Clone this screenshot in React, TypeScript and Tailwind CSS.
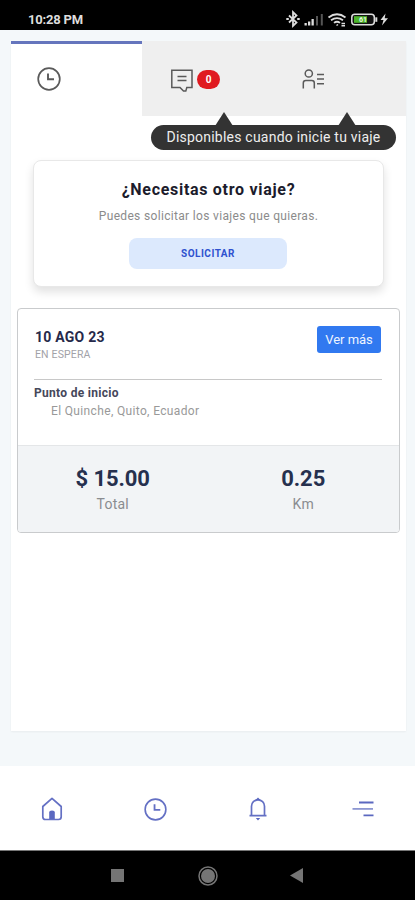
import React from 'react'

const ClockIcon = ({ className }: { className?: string }) => (
  <svg viewBox="0 0 24 24" fill="none" stroke="currentColor" className={className}>
    <circle cx="12" cy="12" r="10.8" strokeWidth="1.7" />
    <path d="M11 6.5v5.8h6" strokeWidth="1.9" />
  </svg>
)

const MessageIcon = () => (
  <svg viewBox="0 0 22 24" fill="none" stroke="#5a5a5a" strokeWidth="1.5" className="w-[22px] h-6">
    <path d="M.8 1.2h20.2v17.3h-5.2l-1 3.6h-2.300l-3.500-3.600H.8zM6.500 7.500h9M6.500 11.500h9" />
  </svg>
)

const PassengerIcon = () => (
  <svg viewBox="0 0 22 20" fill="none" stroke="#5a5a5a" strokeWidth="1.5" className="w-[22px] h-5">
    <circle cx="6.800" cy="4.500" r="3.600" />
    <path d="M1.300 19.500v-5.500q0-2.500 2.500-2.500h6q2.500 0 2.500 2.500v5.500M15 5.500h7M15 10h7M15 14.800h7" />
  </svg>
)

const HomeIcon = () => (
  <svg viewBox="0 0 22 24" fill="none" stroke="#6470c4" strokeWidth="1.7" className="w-[22px] h-6">
    <path d="M1.800 9.500 11 1.300l9.200 8.200v10.300q0 2.700-2.700 2.700h-13q-2.700 0-2.700-2.700z" strokeLinejoin="round" />
    <path d="M8.200 22v-6.500q0-2 2.800-2t2.800 2V22z" fill="#5b68c0" stroke="none" />
  </svg>
)

const BellIcon = () => (
  <svg viewBox="0 0 18 24" fill="none" stroke="#6470c4" strokeWidth="1.700" className="w-[18px] h-6">
    <path d="M2.500 18.500V9.300a6.500 6.500 0 0 1 13 0v9.200M.5 18.700h17" />
    <path d="M6.500 3 9 .5l2.500 2.500zM6.800 21h4.400L9 23.400z" fill="#5b68c0" stroke="none" />
  </svg>
)

const MenuIcon = () => (
  <svg viewBox="0 0 22 16" fill="none" strokeWidth="1.800" className="w-[22px] h-4">
    <path d="M7 1.500h14.500M11.500 14.300h10" stroke="#5b68c0" />
    <path d="M.5 7.900h20.500" stroke="#8d97d2" />
  </svg>
)

const StatusIcons = () => (
  <svg viewBox="0 0 104 18" className="w-[104px] h-[18px]">
    <g fill="none" stroke="#ddd" strokeWidth="1.800">
      <path d="m3 5.500 7.500 7L7 15.800V2.200l3.500 3.300-7.500 7" />
      <path d="M.3 9h2.500M11.200 9h2.500" />
    </g>
    <g fill="#ddd">
      <path d="M18.500 13h2.300v2.500h-2.300zM22 11.500h2.300v4H22zM25.500 9h2.300v6.500h-2.300z" />
      <path d="M30 6h2v9.500h-2zM34.800 4h2v11.500h-2z" fill="#555" />
    </g>
    <g fill="none" stroke="#ddd" strokeWidth="1.800">
      <path d="M42.500 7.500q8.500-6.500 17 0M45 10.300q6-4.300 12 0M48 12.900q3-2.300 6 0" />
      <path d="m50.500 15.500 1.500-1M55.500 13.500h3.500M55.500 15.700h3.500" strokeWidth="1.500" />
    </g>
    <rect x="65.800" y="4.200" width="22.500" height="10.600" rx="3" fill="#111" stroke="#ddd" strokeWidth="1.500" />
    <rect x="68" y="6.200" width="13" height="6.600" fill="#4db52b" />
    <path d="M89.300 7.300h2v4.500h-2z" fill="#ddd" />
    <text x="73" y="12.300" fontSize="7" fontWeight="700" fill="#e9f5e4" fontFamily="Roboto, sans-serif">61</text>
    <path d="m99.500 3.500-5 6.500h3l-1.500 5.500 6-7.300h-3.300z" fill="#ddd" />
  </svg>
)

const stats = [
  { value: '$ 15.00', label: 'Total' },
  { value: '0.25', label: 'Km' },
]

export default function App() {
  return (
    <div className="w-[415px] h-[900px] flex flex-col overflow-hidden bg-[#f4f8fa] font-['Roboto',sans-serif] whitespace-nowrap">
      <header className="h-[30px] shrink-0 bg-black flex items-center justify-between pl-7 pr-[25px] pt-2">
        <span className="mt-0.5 text-[13px] leading-4 font-bold text-[#ddd] tracking-[-0.2px]">10:28 PM</span>
        <StatusIcons />
      </header>

      <main className="mt-[11px] ml-[11px] w-[395px] h-[690px] shrink-0 bg-white shadow-[0_1px_2px_rgba(0,0,0,0.05)]">
        <div className="relative flex h-[75px]">
          <div className="w-[131px] border-t-[3px] border-[#6575bd] pt-[23px] pl-[26px] text-[#5a5a5a]">
            <ClockIcon className="w-6 h-6" />
          </div>
          <div className="w-[132px] bg-[#efefef] flex pl-[29px] pt-7">
            <MessageIcon />
            <span className="ml-1 mt-px w-[23px] h-[19px] rounded-full bg-[#e01a20] text-white text-[10px] leading-[19px] font-bold text-center">0</span>
          </div>
          <div className="w-[132px] bg-[#efefef] pl-[28px] pt-7">
            <PassengerIcon />
          </div>

          <div className="absolute left-[140px] top-[84px] w-[245px] h-[25px] rounded-full bg-[#333] text-[#eee] text-[14px] leading-[25px] text-center tracking-[0.22px]">
            Disponibles cuando inicie tu viaje
            <span className="absolute left-[64px] -top-[13px] border-x-[9px] border-b-[14px] border-x-transparent border-b-[#333]" />
            <span className="absolute left-[187px] -top-[13px] border-x-[9px] border-b-[14px] border-x-transparent border-b-[#333]" />
          </div>
        </div>

        <section className="mt-11 ml-[22px] w-[351px] h-[127px] rounded-lg border border-[#e8e8e8] bg-white shadow-[0_5px_10px_rgba(0,0,0,0.12)] flex flex-col items-center">
          <h2 className="mt-[19px] text-[16px] leading-5 font-bold text-[#1c1c2c] tracking-[0.7px]">¿Necesitas otro viaje?</h2>
          <p className="mt-2 text-[12px] leading-4 text-[#8b8b8b] tracking-[0.33px]">Puedes solicitar los viajes que quieras.</p>
          <button className="mt-[14px] mr-px w-[158px] h-[31px] rounded-lg bg-[#dce9fd] text-[10px] font-bold text-[#2f52cf] tracking-[0.5px]">SOLICITAR</button>
        </section>

        <section className="mt-[21px] ml-[6px] w-[383px] h-[225px] rounded border border-[#c9cbcd] bg-white overflow-hidden flex flex-col">
          <div className="h-[136px] shrink-0 pl-4 pr-[17px]">
            <div className="flex justify-between h-[71px] border-b border-[#c8c8c8] pt-[17px] pl-px">
              <div>
                <h3 className="mt-px text-[14px] leading-5 font-bold text-[#26294a] tracking-[0.25px]">10 AGO 23</h3>
                <p className="text-[10.5px] leading-4 text-[#a2a2a8] tracking-[0.15px]">EN ESPERA</p>
              </div>
              <button className="mr-px w-16 h-[27px] rounded-[3px] bg-[#3179f0] text-[13px] text-[#eef4ff] tracking-[-0.05px]">Ver más</button>
            </div>
            <h4 className="mt-[5px] text-[12px] leading-4 font-bold text-[#45475a] tracking-[0.3px]">Punto de inicio</h4>
            <p className="mt-0.5 pl-[17px] text-[12px] leading-4 text-[#999] tracking-[0.35px]">El Quinche, Quito, Ecuador</p>
          </div>
          <div className="grow grid grid-cols-2 bg-[#f2f4f6] border-t border-[#e4e6e8] text-center">
            {stats.map(s => (
              <div key={s.label} className="pt-[21px] pr-px">
                <p className="text-[22px] leading-6 font-bold text-[#26304e] tracking-[-0.1px]">{s.value}</p>
                <p className="mt-[3px] text-[14px] leading-5 text-[#8a8c90] tracking-[0.2px]">{s.label}</p>
              </div>
            ))}
          </div>
        </section>
      </main>

      <nav className="mt-[35px] h-[84px] shrink-0 bg-white flex items-center pt-0.5 pl-[41px] text-[#6470c4]">
        <HomeIcon />
        <ClockIcon className="ml-[81px] w-[23px] h-[23px]" />
        <span className="ml-[82px]">
          <BellIcon />
        </span>
        <span className="ml-[85px]">
          <MenuIcon />
        </span>
      </nav>

      <footer className="h-[50px] shrink-0 bg-black border-t border-[#777] flex items-center pl-[111px] text-[#757575]">
        <span className="w-[13px] h-[13px] bg-current" />
        <svg viewBox="0 0 20 20" className="ml-[74px] w-5 h-5">
          <circle cx="10" cy="10" r="9" fill="none" stroke="currentColor" strokeWidth="1.500" />
          <circle cx="10" cy="10" r="7" fill="currentColor" />
        </svg>
        <svg viewBox="0 0 13 15" className="ml-[72px] w-[13px] h-[15px]">
          <path d="M13 0v15L0 7.500z" fill="currentColor" />
        </svg>
      </footer>
    </div>
  )
}
